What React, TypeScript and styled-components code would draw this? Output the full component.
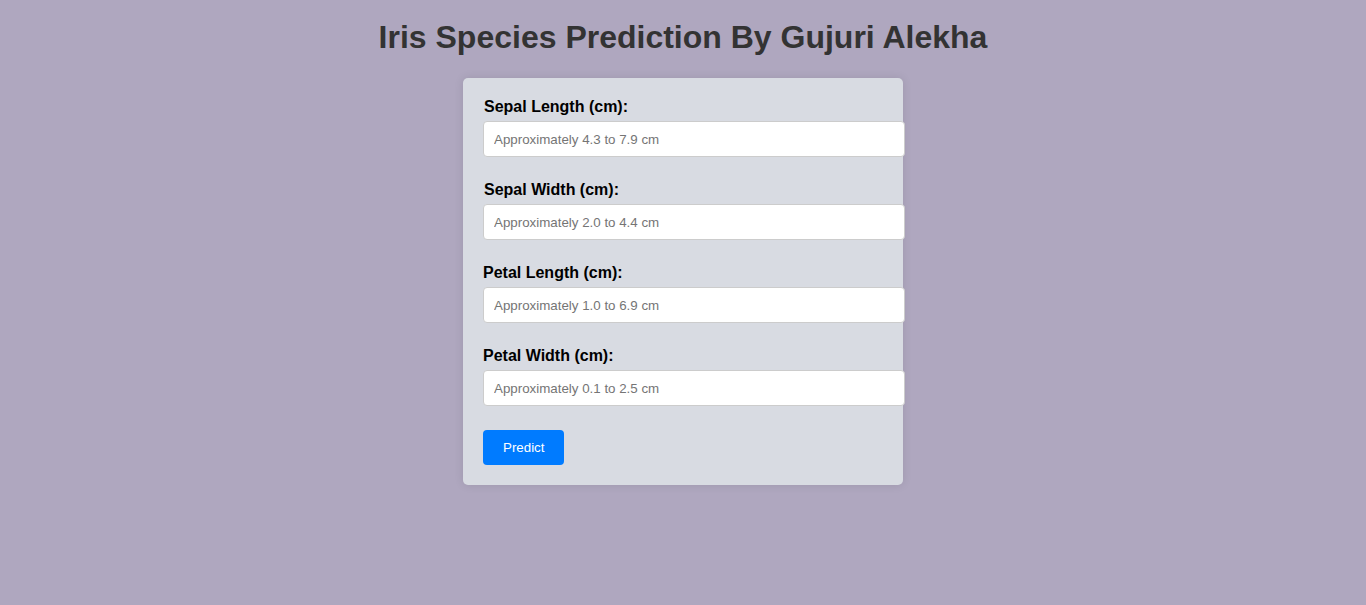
import React from "react";
import styled, { createGlobalStyle } from "styled-components";

const Global = createGlobalStyle`
  html, body { margin: 0; padding: 0; }
  body {
    background: #afa7bf;
    font-family: "Liberation Sans", Arial, sans-serif;
    min-height: 605px;
  }
`;

const Page = styled.div`
  display: flex;
  flex-direction: column;
  align-items: center;
`;

const Title = styled.h1`
  font-size: 32px;
  line-height: 37px;
  font-weight: bold;
  color: #333;
  margin: 19px 0 22px;
  text-align: center;
`;

const Card = styled.form`
  width: 400px;
  padding: 20px;
  background: #d8dbe2;
  border-radius: 5px;
  box-shadow: 0 0 10px rgba(0, 0, 0, 0.1);
`;

const Group = styled.div`
  margin-bottom: 24px;
`;

const Label = styled.label<{ $indent?: boolean }>`
  display: block;
  font-size: 16px;
  line-height: 18px;
  font-weight: bold;
  color: #000;
  margin-bottom: 5px;
  padding-left: ${(p) => (p.$indent ? "1px" : "0")};
`;

const Input = styled.input`
  display: block;
  box-sizing: border-box;
  width: 422px;
  height: 36px;
  padding: 10px;
  font-size: 13.33px;
  line-height: 15px;
  font-family: "Liberation Sans", Arial, sans-serif;
  border: 1px solid #ccc;
  border-radius: 4px;
  background: #fff;
  margin: 0;
  &::placeholder { color: #757575; }
`;

const Button = styled.button`
  padding: 10px 20px;
  font-size: 13.33px;
  line-height: 15px;
  font-family: "Liberation Sans", Arial, sans-serif;
  background: #007bff;
  color: #fff;
  border: none;
  border-radius: 4px;
  cursor: pointer;
`;

const fields = [
  { label: "Sepal Length (cm):", ph: "Approximately 4.3 to 7.9 cm", indent: true },
  { label: "Sepal Width (cm):", ph: "Approximately 2.0 to 4.4 cm", indent: true },
  { label: "Petal Length (cm):", ph: "Approximately 1.0 to 6.9 cm" },
  { label: "Petal Width (cm):", ph: "Approximately 0.1 to 2.5 cm" },
];

export default function App() {
  return (
    <Page>
      <Global />
      <Title>Iris Species Prediction By Gujuri Alekha</Title>
      <Card onSubmit={(e) => e.preventDefault()}>
        {fields.map((f) => (
          <Group key={f.label}>
            <Label $indent={f.indent}>{f.label}</Label>
            <Input type="text" placeholder={f.ph} />
          </Group>
        ))}
        <Button type="submit">Predict</Button>
      </Card>
    </Page>
  );
}
